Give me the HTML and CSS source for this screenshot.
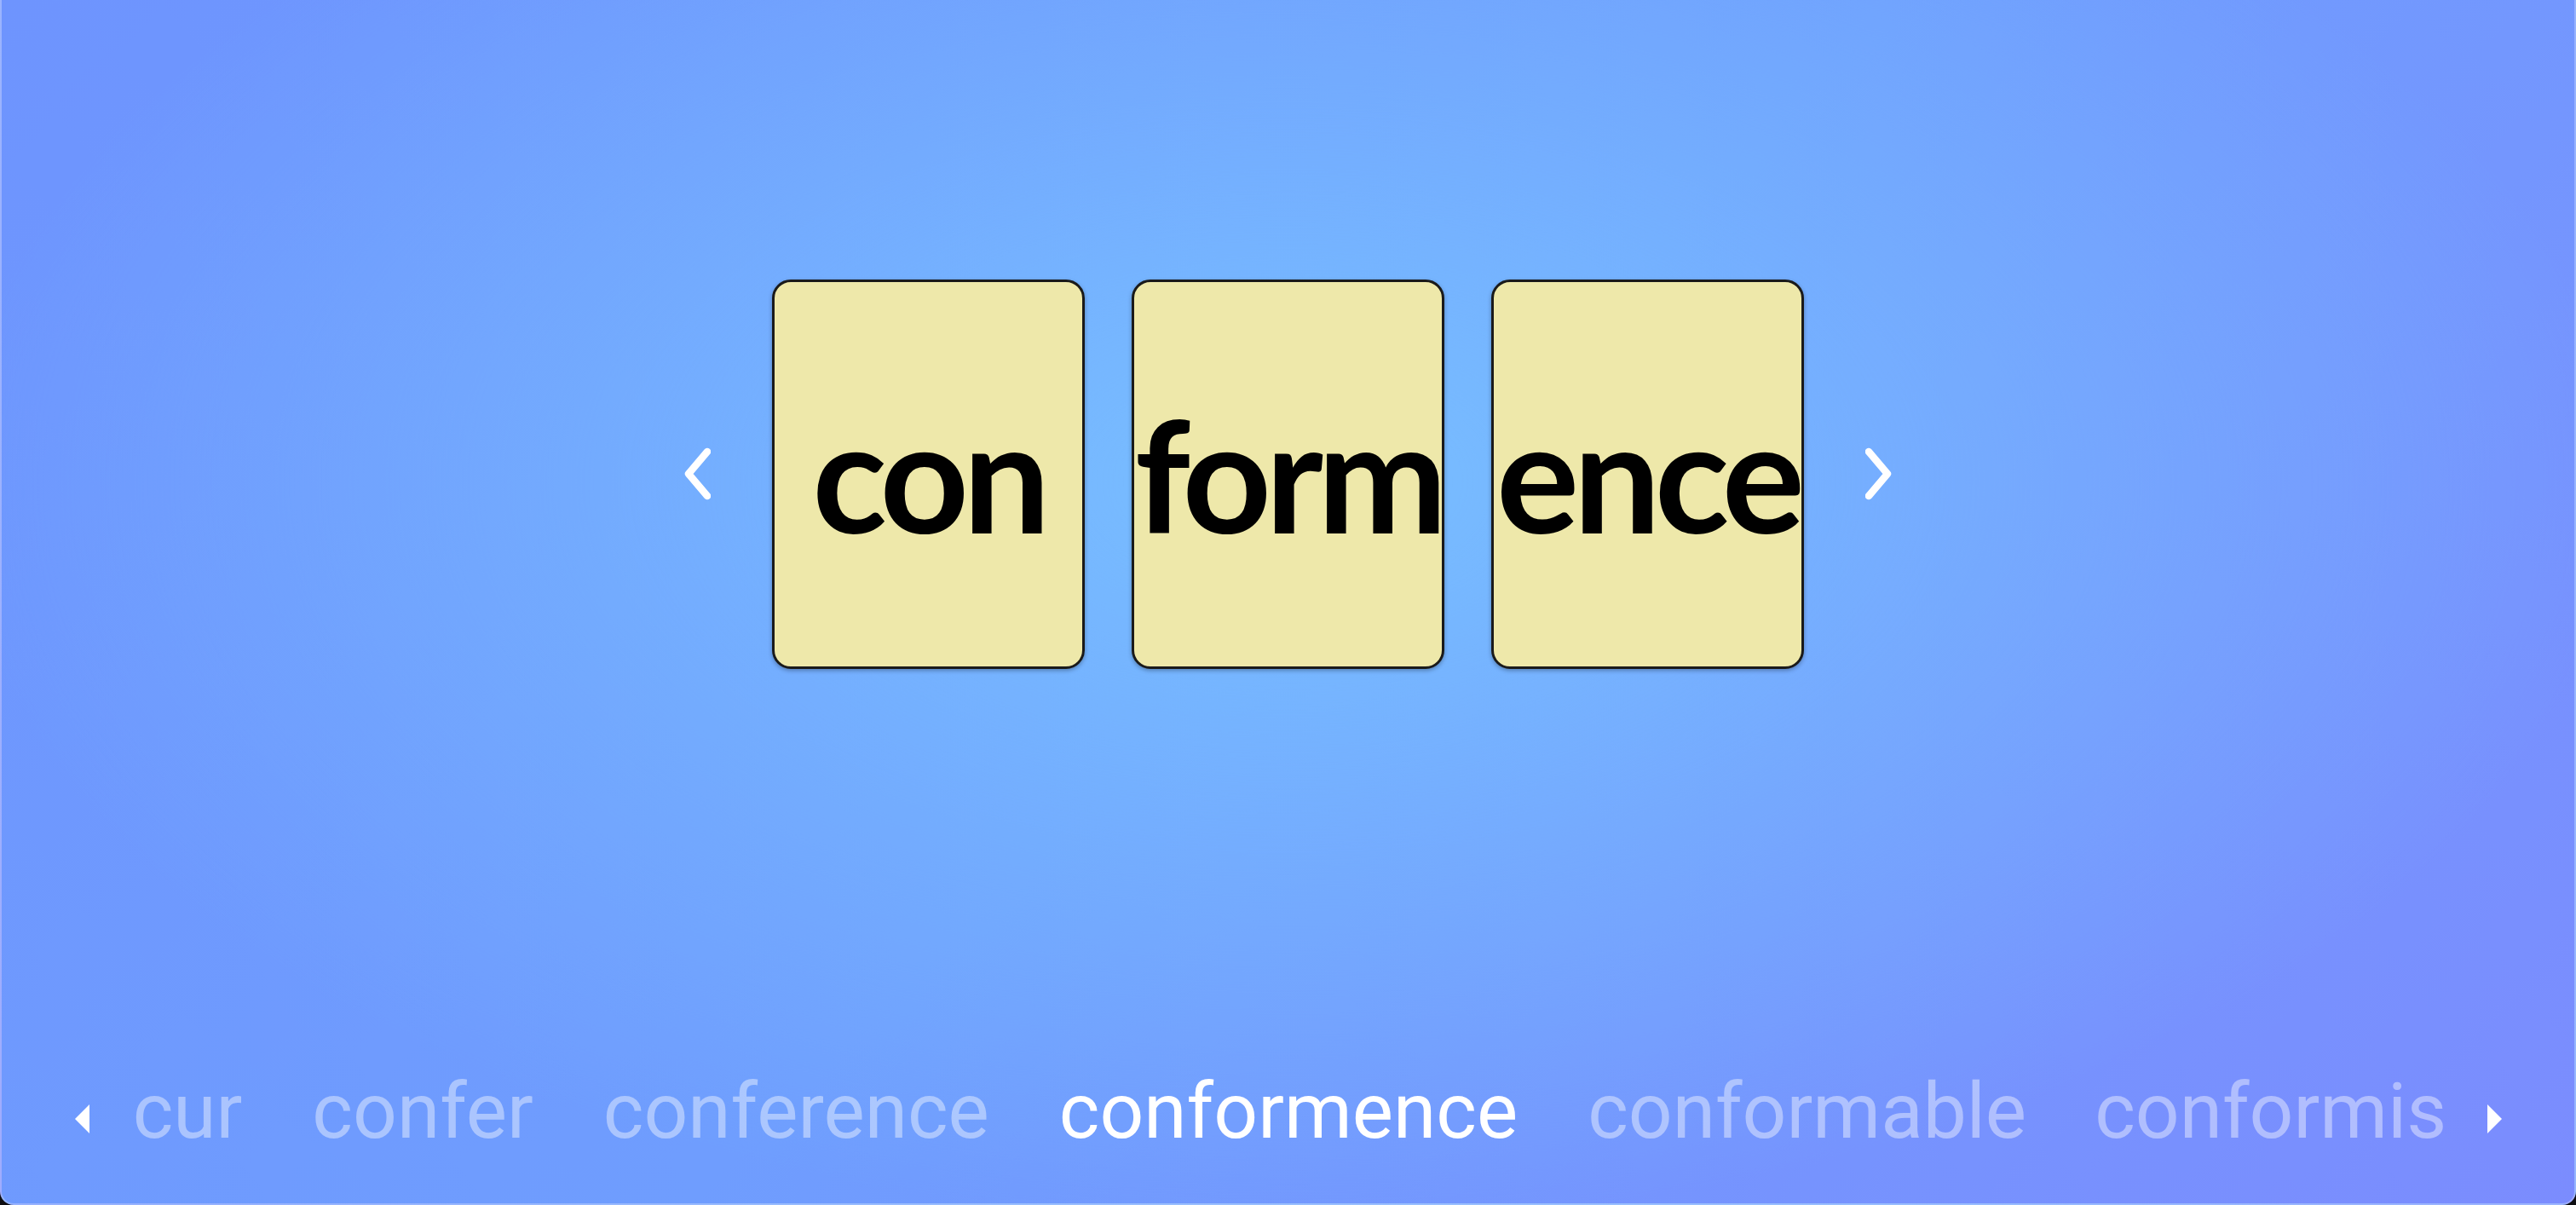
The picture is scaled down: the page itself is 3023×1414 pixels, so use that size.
FILE: index.html
```html
<!DOCTYPE html>
<html lang="en">
<head>
  <meta charset="UTF-8" />
  <meta name="viewport" content="width=device-width, initial-scale=1.0"/>
  <title>Word Builder</title>
  <link rel="stylesheet" href="styles.css">
</head>
<body>
  <div class="stage">
    <div class="board">
      <button class="chevron" aria-label="Previous">
        <svg width="34" height="62" viewBox="0 0 34 62"><polyline points="30,5 8,31 30,57" /></svg>
      </button>
      <div class="tiles">
        <div class="tile">con</div>
        <div class="tile">form</div>
        <div class="tile">ence</div>
      </div>
      <button class="chevron" aria-label="Next">
        <svg width="34" height="62" viewBox="0 0 34 62"><polyline points="4,5 26,31 4,57" /></svg>
      </button>
    </div>

    <div class="strip">
      <span class="tri tri-left"></span>
      <div class="words">
        <div class="words-side words-before">
          <span class="word">cur</span>
          <span class="word">confer</span>
          <span class="word">conference</span>
        </div>
        <span class="word active">conformence</span>
        <div class="words-side words-after">
          <span class="word">conformable</span>
          <span class="word">conformis</span>
        </div>
      </div>
      <span class="tri tri-right"></span>
    </div>
  </div>
</body>
</html>
```

FILE: styles.css
```css
html, body {
  margin: 0;
  height: 100%;
}
body {
  background: #0e0e12;
  font-family: Roboto, "Liberation Sans", sans-serif;
}
.stage {
  box-sizing: border-box;
  height: 100vh;
  display: flex;
  flex-direction: column;
  border: 2px solid rgba(255,255,255,0.28);
  border-top: none;
  border-radius: 0 0 16px 16px;
  background:
    radial-gradient(ellipse 52% 62% at 50% 40%, rgba(120,190,255,1) 0%, rgba(120,190,255,0) 100%),
    linear-gradient(135deg, #6e94fe 0%, #6f9dfe 50%, #7b8cfe 100%);
}
.board {
  flex: 1;
  display: flex;
  align-items: center;
  justify-content: center;
  gap: 72px;
}
.chevron {
  background: none;
  border: 0;
  padding: 0;
  display: flex;
}
.chevron polyline {
  fill: none;
  stroke: #ffffff;
  stroke-width: 8.5;
  stroke-linecap: round;
  stroke-linejoin: round;
}
.tiles {
  display: flex;
  gap: 55px;
}
.tile {
  box-sizing: border-box;
  width: 367px;
  height: 457px;
  display: flex;
  align-items: center;
  justify-content: center;
  white-space: nowrap;
  background: #eee8aa;
  border: 3px solid #1a1a1a;
  border-radius: 22px;
  box-shadow: 0 2px 5px rgba(0,0,0,0.3);
  font-family: Lato, "Open Sans", sans-serif;
  font-weight: 700;
  font-size: 182px;
  line-height: 1;
  letter-spacing: -7px;
  color: #000;
}
.strip {
  height: 300px;
  box-sizing: border-box;
  padding: 84px 85px 0 86px;
  display: flex;
  align-items: center;
  gap: 45px;
}
.tri {
  width: 0;
  height: 0;
  margin-top: 18px;
  border-top: 17px solid transparent;
  border-bottom: 17px solid transparent;
}
.tri-left {
  border-right: 17px solid #ffffff;
}
.tri-right {
  border-left: 17px solid #ffffff;
}
.words {
  flex: 1;
  min-width: 0;
  display: grid;
  grid-template-columns: 1fr auto 1fr;
  column-gap: 82px;
}
.words-side {
  display: flex;
  gap: 82px;
}
.words-before {
  justify-content: flex-end;
}
.words-after {
  justify-content: flex-start;
  gap: 80px;
}
.word {
  font-size: 91px;
  line-height: 1;
  white-space: nowrap;
  flex-shrink: 0;
  color: rgba(255,255,255,0.42);
}
.word.active {
  color: #ffffff;
}
```
